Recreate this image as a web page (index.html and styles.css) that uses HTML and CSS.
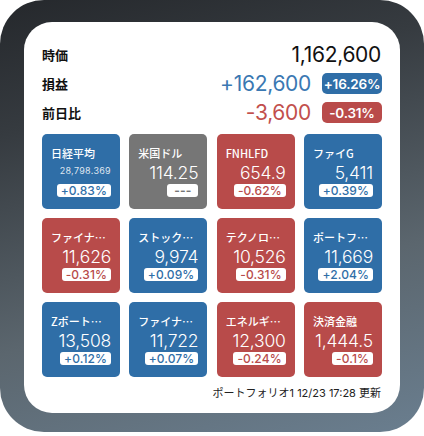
FILE: index.html
```html
<!DOCTYPE html>
<html lang="ja">
<head>
<meta charset="utf-8">
<link rel="stylesheet" href="styles.css">
</head>
<body>
<div class="frame">
  <div class="card">
    <div class="stats">
      <div class="stat">
        <span class="label">時価</span>
        <span class="amount">1,162,600</span>
      </div>
      <div class="stat">
        <span class="label">損益</span>
        <span class="amount up">+162,600</span>
        <span class="pill pill-up">+16.26%</span>
      </div>
      <div class="stat">
        <span class="label">前日比</span>
        <span class="amount down">-3,600</span>
        <span class="pill pill-down">-0.31%</span>
      </div>
    </div>
    <div class="grid">
      <div class="tile blue"><div class="name">日経平均</div><div class="val small">28,798.369</div><div class="chg"><span>+0.83%</span></div></div>
      <div class="tile grey"><div class="name">米国ドル</div><div class="val">114.25</div><div class="chg"><span>---</span></div></div>
      <div class="tile red"><div class="name">FNHLFD</div><div class="val">654.9</div><div class="chg"><span>-0.62%</span></div></div>
      <div class="tile blue"><div class="name">ファイG</div><div class="val">5,411</div><div class="chg"><span>+0.39%</span></div></div>
      <div class="tile red"><div class="name">ファイナ…</div><div class="val">11,626</div><div class="chg"><span>-0.31%</span></div></div>
      <div class="tile blue"><div class="name">ストック…</div><div class="val">9,974</div><div class="chg"><span>+0.09%</span></div></div>
      <div class="tile red"><div class="name">テクノロ…</div><div class="val">10,526</div><div class="chg"><span>-0.31%</span></div></div>
      <div class="tile blue"><div class="name">ポートフ…</div><div class="val">11,669</div><div class="chg"><span>+2.04%</span></div></div>
      <div class="tile blue"><div class="name">Zポート…</div><div class="val">13,508</div><div class="chg"><span>+0.12%</span></div></div>
      <div class="tile blue"><div class="name">ファイナ…</div><div class="val">11,722</div><div class="chg"><span>+0.07%</span></div></div>
      <div class="tile red"><div class="name">エネルギ…</div><div class="val">12,300</div><div class="chg"><span>-0.24%</span></div></div>
      <div class="tile red"><div class="name">決済金融</div><div class="val">1,444.5</div><div class="chg"><span>-0.1%</span></div></div>
    </div>
    <div class="footer">ポートフォリオ1 12/23 17:28 更新</div>
  </div>
</div>
</body>
</html>
```
FILE: styles.css
```css
* { box-sizing: border-box; }
html, body { margin: 0; padding: 0; background: #ffffff; }
body {
  width: 424px;
  height: 436px;
  font-family: Inter, "Noto Sans CJK JP", sans-serif;
  overflow: hidden;
}
.frame {
  width: 424px;
  height: 432px;
  border-radius: 44px;
  background: linear-gradient(165deg, #25282c 0%, #363b40 25%, #5b666e 65%, #6a7e8f 100%);
  padding: 22px 24px 19px 24px;
}
.card {
  background: #ffffff;
  border-radius: 28px;
  height: 391px;
  padding: 18px 18px 0 18px;
  display: flex;
  flex-direction: column;
}
.stats { display: flex; flex-direction: column; }
.stat {
  height: 29px;
  display: flex;
  align-items: center;
  gap: 10px;
}
.label {
  font-family: "Noto Sans CJK JP", sans-serif;
  font-weight: 700;
  font-size: 13px;
  color: #111;
  margin-right: auto;
}
.amount {
  font-size: 21px;
  font-weight: 400;
  color: #111;
  letter-spacing: -0.3px;
  margin-right: 1px;
}
.amount.up { color: #3a78b2; }
.amount.down { color: #c24f4c; }
.pill {
  width: 60px;
  height: 21px;
  border-radius: 5px;
  color: #fff;
  font-size: 13.5px;
  font-weight: 600;
  display: flex;
  align-items: center;
  justify-content: center;
  letter-spacing: -0.2px;
}
.pill-up { background: #2f6ea7; }
.pill-down { background: #b94b4a; }

.grid {
  margin-top: 7px;
  display: grid;
  grid-template-columns: repeat(4, 1fr);
  grid-auto-rows: 75px;
  column-gap: 9.3px;
  row-gap: 9px;
}
.tile {
  border-radius: 5px;
  padding: 12px 9px 0 9px;
  color: #fff;
  display: flex;
  flex-direction: column;
}
.tile.blue { background: #2f6ea7; --c: #2f6ea7; }
.tile.red { background: #b84b4a; --c: #b84b4a; }
.tile.grey { background: #767676; --c: #767676; }
.name {
  font-family: "Noto Sans CJK JP", sans-serif;
  font-size: 11px;
  font-weight: 500;
  line-height: 14px;
  height: 14px;
  white-space: nowrap;
}
.val {
  margin-top: 3px;
  height: 20px;
  line-height: 20px;
  text-align: right;
  font-size: 17.5px;
  font-weight: 300;
  letter-spacing: -0.2px;
}
.val.small {
  font-size: 9px;
  font-weight: 400;
  color: rgba(255,255,255,0.85);
  letter-spacing: 0.3px;
  line-height: 16px;
}
.chg {
  margin-top: 1px;
  display: flex;
  justify-content: flex-end;
}
.chg span {
  background: #fff;
  color: var(--c);
  border-radius: 3px;
  height: 13px;
  line-height: 13px;
  padding: 0 4px;
  font-size: 12px;
  font-weight: 500;
  letter-spacing: 0.1px;
}
.tile.grey .chg span { padding: 0 7px; font-weight: 700; }
.footer {
  margin-top: 8px;
  height: 16px;
  line-height: 16px;
  text-align: right;
  font-size: 11px;
  color: #222;
  padding-right: 1px;
}
```
